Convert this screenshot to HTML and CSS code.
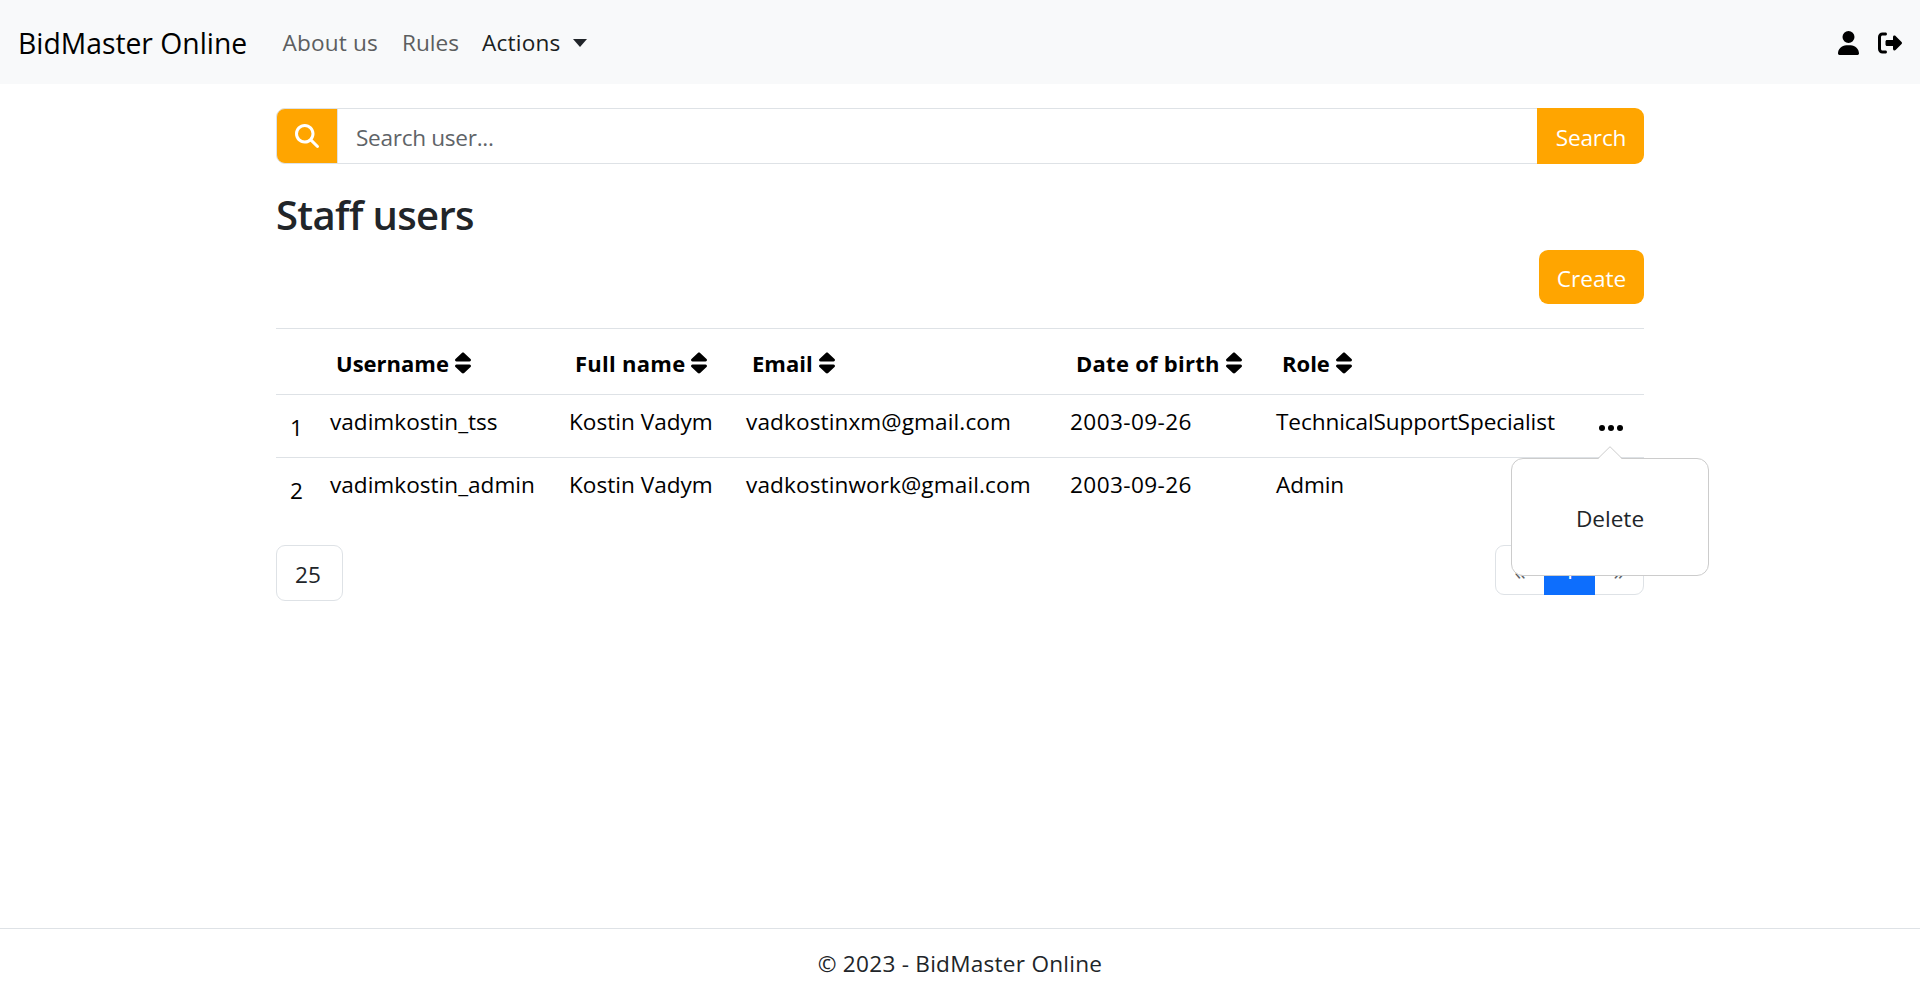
FILE: index.html
```html
<!DOCTYPE html>
<html lang="en">
<head>
<meta charset="utf-8">
<title>BidMaster Online</title>
<link rel="stylesheet" href="styles.css">
</head>
<body>
<svg class="sprite" aria-hidden="true">
  <symbol id="sort" viewBox="0 0 320 512" preserveAspectRatio="none"><path d="M137.400 41.400c12.500-12.500 32.800-12.500 45.300 0l128 128c9.200 9.200 11.900 22.900 6.900 34.900s-16.600 19.800-29.600 19.800H32c-12.900 0-24.600-7.800-29.600-19.800s-2.200-25.700 6.900-34.900l128-128zm0 429.300l-128-128c-9.200-9.200-11.900-22.900-6.900-34.900s16.600-19.800 29.600-19.800H288c12.900 0 24.600 7.800 29.600 19.800s2.200 25.700-6.900 34.900l-128 128c-12.500 12.500-32.800 12.500-45.300 0z"/></symbol>
</svg>
<header class="navbar">
  <a class="brand">BidMaster Online</a>
  <nav class="nav">
    <a class="nav-link about">About us</a>
    <a class="nav-link rules">Rules</a>
    <a class="nav-link active">Actions<span class="caret"></span></a>
  </nav>
  <div class="nav-icons">
    <svg class="icon-user" viewBox="0 0 448 512"><path d="M224 256A128 128 0 1 0 224 0a128 128 0 1 0 0 256zm-45.700 48C79.800 304 0 383.800 0 482.300C0 498.700 13.300 512 29.700 512H418.300c16.400 0 29.700-13.300 29.700-29.700C448 383.800 368.200 304 269.700 304H178.300z"/></svg>
    <svg class="icon-exit" viewBox="0 0 512 512"><path d="M502.600 278.600c12.500-12.500 12.500-32.800 0-45.300l-128-128c-9.200-9.200-22.900-11.900-34.900-6.900S320 115.100 320 128v64H192c-17.700 0-32 14.300-32 32v64c0 17.700 14.300 32 32 32h128v64c0 12.900 7.800 24.600 19.800 29.600s25.700 2.200 34.900-6.900l128-128zM160 96c17.700 0 32-14.300 32-32s-14.300-32-32-32H96C43 32 0 75 0 128V384c0 53 43 96 96 96h64c17.700 0 32-14.300 32-32s-14.300-32-32-32H96c-17.700 0-32-14.300-32-32V128c0-17.700 14.300-32 32-32h64z"/></svg>
  </div>
</header>
<main class="container">
  <div class="search">
    <span class="search-icon"><svg viewBox="0 0 512 512"><path d="M416 208c0 45.900-14.900 88.300-40 122.700L502.600 457.400c12.500 12.500 12.500 32.800 0 45.300s-32.800 12.500-45.300 0L330.700 376c-34.400 25.200-76.800 40-122.700 40C93.100 416 0 322.900 0 208S93.100 0 208 0S416 93.100 416 208zM208 352a144 144 0 1 0 0-288 144 144 0 1 0 0 288z"/></svg></span>
    <div class="search-input">Search user...</div>
    <div class="search-btn">Search</div>
  </div>
  <h3 class="title">Staff users</h3>
  <div class="toolbar"><div class="btn">Create</div></div>
  <table class="users">
    <colgroup><col class="c-num"><col class="c-user"><col class="c-name"><col class="c-mail"><col class="c-date"><col class="c-role"><col></colgroup>
    <thead>
      <tr>
        <th></th>
        <th><span class="head">Username<svg class="sort"><use href="#sort"/></svg></span></th>
        <th><span class="head spaced">Full name<svg class="sort"><use href="#sort"/></svg></span></th>
        <th><span class="head">Email<svg class="sort"><use href="#sort"/></svg></span></th>
        <th><span class="head spaced">Date of birth<svg class="sort"><use href="#sort"/></svg></span></th>
        <th><span class="head">Role<svg class="sort"><use href="#sort"/></svg></span></th>
        <th></th>
      </tr>
    </thead>
    <tbody>
      <tr>
        <td class="num">1</td><td>vadimkostin_tss</td><td>Kostin Vadym</td><td class="mail">vadkostinxm@gmail.com</td><td class="date">2003-09-26</td><td class="role">TechnicalSupportSpecialist</td>
        <td class="menu">
          <svg class="dots" viewBox="0 0 24 6"><circle cx="3" cy="3" r="3"/><circle cx="12" cy="3" r="3"/><circle cx="21" cy="3" r="3"/></svg>
          <div class="popover">
            <svg class="arrow" viewBox="0 0 24 13"><path class="arrow-fill" d="M0 13 12 1 24 13z"/><path class="arrow-line" d="M0 12.500 12 .7 24 12.500"/></svg>
            Delete
          </div>
        </td>
      </tr>
      <tr>
        <td class="num">2</td><td>vadimkostin_admin</td><td>Kostin Vadym</td><td class="mail">vadkostinwork@gmail.com</td><td class="date">2003-09-26</td><td class="role">Admin</td><td></td>
      </tr>
    </tbody>
  </table>
  <div class="pager">
    <div class="page-size">25</div>
    <div class="pagination"><span class="page">«</span><span class="page current">1</span><span class="page">»</span></div>
  </div>
</main>
<footer class="footer">© 2023 - BidMaster Online</footer>
</body>
</html>
```
FILE: styles.css
```css
* { box-sizing: border-box; }
body {
  margin: 0;
  height: 994px;
  display: flex;
  flex-direction: column;
  overflow: hidden;
  background: #fff;
  color: #212529;
  font: 22.6px/36px "Open Sans", "Noto Sans", sans-serif;
}
.sprite { display: none; }
.navbar {
  height: 84px;
  flex: none;
  display: flex;
  align-items: center;
  padding: 2px 18px 0;
  background: #f8f9fa;
}
.brand { width: 264.500px; color: #000; font-size: 28.3px; line-height: 45px; white-space: nowrap; }
.nav { display: flex; white-space: nowrap; }
.nav-link { color: #5c5e60; }
.about { width: 119.500px; letter-spacing: .15px; }
.rules { width: 80px; }
.active { color: #1b1e21; display: flex; align-items: center; letter-spacing: .2px; }
.caret { margin: 0 0 1px 13px; border: 7px solid transparent; border-top: 8px solid #212529; border-bottom: 0; }
.nav-icons { margin-left: auto; display: flex; align-items: center; gap: 19px; }
.icon-user { width: 21px; height: 24px; }
.icon-exit { width: 24px; height: 24px; }
.container { width: 1368px; margin: 24px auto 0; flex: 1; }
.search { display: flex; height: 56px; }
.search-icon {
  width: 62px;
  display: flex;
  align-items: center;
  justify-content: center;
  border: 1px solid #dee2e6;
  border-radius: 9px 0 0 9px;
  background: orange;
}
.search-icon svg { width: 24px; height: 24px; fill: #fff; }
.search-input { flex: 1; padding: 11px 18px; border: solid #dee2e6; border-width: 1px 0; color: #5f6468; letter-spacing: -.3px; }
.search-btn { width: 107px; padding: 12px 0 0 1px; border-radius: 0 9px 9px 0; background: orange; color: #fff; text-align: center; letter-spacing: -.15px; }
.title { margin: 26px 0 0; font-size: 40px; font-weight: 600; line-height: 50px; letter-spacing: -.65px; }
.toolbar { display: flex; justify-content: flex-end; margin-top: 10px; }
.btn { width: 105px; height: 54px; padding: 11px 0 0; border-radius: 9px; background: orange; color: #fff; text-align: center; }
.users { width: 100%; margin-top: 24px; border-collapse: separate; border-spacing: 0; table-layout: fixed; color: #000; }
.c-num { width: 48px; }
.c-user { width: 239px; }
.c-name { width: 177px; }
.c-mail { width: 324px; }
.c-date { width: 206px; }
.c-role { width: 306px; }
th, td { padding: 9px 6px 0; text-align: left; vertical-align: top; border-top: 1px solid #dee2e6; white-space: nowrap; }
th { height: 66px; padding: 16px 12px 0; font-weight: 700; font-size: 22px; }
td { height: 63px; }
.head { display: flex; align-items: center; gap: 6px; }
.spaced { letter-spacing: .27px; }
.sort { width: 16px; height: 24px; }
.mail { letter-spacing: .1px; }
.date { letter-spacing: .4px; }
.role { letter-spacing: -.1px; }
.num { padding: 15px 0 0 14px; }
.menu { position: relative; padding: 28px 0 0 22.500px; line-height: 0; }
.dots { width: 24px; height: 6px; }
.popover {
  position: absolute;
  z-index: 2;
  top: 63px;
  left: -65px;
  width: 198px;
  height: 118px;
  border: 1px solid #ccc;
  border-radius: 12px;
  background: #fff;
  color: #212529;
  line-height: 120px;
  text-align: center;
}
.arrow { position: absolute; top: -13px; left: 86px; width: 24px; height: 13px; }
.arrow-fill { fill: #fff; }
.arrow-line { fill: none; stroke: #ccc; }
.pager { display: flex; justify-content: space-between; align-items: flex-start; margin-top: 25px; }
.page-size { width: 67px; height: 56px; padding: 11px 18px 0; border: 1px solid #dee2e6; border-radius: 9px; }
.pagination { display: flex; width: 149px; height: 50px; border: 1px solid #dee2e6; border-radius: 9px; line-height: 51px; }
.page { flex: 1; text-align: center; color: #5c6267; }
.current { flex: none; width: 51px; height: 50px; margin: -1px 0; background: #0d6efd; color: #fff; line-height: 52px; }
.footer { height: 66px; flex: none; padding-top: 17px; border-top: 1px solid #dee2e6; text-align: center; letter-spacing: .25px; }
```
